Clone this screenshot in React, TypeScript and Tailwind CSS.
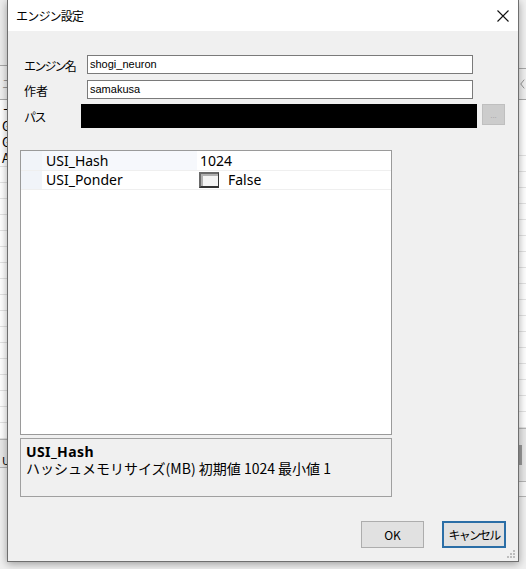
import React from "react";

const jp = { fontFamily: '"Noto Sans CJK JP", "Noto Sans", sans-serif' };
const lat = { fontFamily: '"Liberation Sans", "Noto Sans CJK JP", sans-serif' };
const noto = { fontFamily: '"Noto Sans", "Noto Sans CJK JP", sans-serif' };

function BgRows({ count }: { count: number }) {
  return (
    <>
      {Array.from({ length: count }).map((_, i) => (
        <div key={i} className="h-[16px] shrink-0 border-b border-[#e3e3e3] bg-white" />
      ))}
    </>
  );
}

function Background() {
  return (
    <div className="absolute inset-0 flex bg-[#f0f0f0]">
      <div className="flex w-[7px] flex-col overflow-hidden text-[13px] leading-none text-black" style={jp}>
        <div className="h-[65px] shrink-0 bg-[#ececec]" />
        <div className="h-[35px] shrink-0 border-y border-[#a8a8a8] bg-[#f0f0f0] pt-[10px] pl-[2px] text-[#999]">エ</div>
        <div className="h-[16px] shrink-0 bg-white pt-[5px] pl-[2px]">エ</div>
        <div className="h-[17px] shrink-0 bg-white pt-[3px] pl-[2px]">G</div>
        <div className="h-[17px] shrink-0 bg-white pt-[2px] pl-[2px]">G</div>
        <div className="h-[17px] shrink-0 border-b border-[#e3e3e3] bg-white pt-[1px] pl-[2px]">A</div>
        <BgRows count={17} />
        <div className="flex h-[28px] shrink-0 items-end border-t border-[#b5b5b5] bg-[#e8e8e8] pl-[2px] pb-[1px]">
          <div className="text-[11px]">U</div>
        </div>
        <div className="flex-1 border-t border-[#b5b5b5] bg-[#f0f0f0]" />
      </div>
      <div className="flex-1" />
      <div className="flex w-[7px] flex-col overflow-hidden">
        <div className="h-[68px] shrink-0 bg-[#f0f0f0]" />
        <div className="flex h-[32px] shrink-0 items-center border-y border-[#a8a8a8] bg-[#f0f0f0]">
          <svg width="8" height="12" viewBox="0 0 8 12"><path d="M6 1 L2 6 L6 11" stroke="#888" fill="none" strokeWidth="1" /></svg>
        </div>
        <div className="h-[40px] shrink-0 bg-white" />
        <BgRows count={18} />
        <div className="flex h-[54px] shrink-0 items-center border-y border-[#b5b5b5] bg-[#e8e8e8]">
          <div className="h-[20px] w-[3px] bg-[#9a9a9a]" />
        </div>
        <div className="h-[15px] shrink-0 border-b border-[#b5b5b5] bg-[#f7f7f7]" />
        <div className="flex-1 bg-[#f0f0f0]" />
      </div>
    </div>
  );
}

function Field({ label, value, labelClass }: { label: string; value: string; labelClass?: string }) {
  return (
    <div className="flex items-center">
      <div className={"w-[79px] pl-[16px] pt-[3px] text-[12px] leading-none text-black " + (labelClass ?? "")} style={jp}>
        {label}
      </div>
      <div className="flex h-[19px] w-[386px] items-center border border-[#7a7a7a] bg-white pl-[2px] text-[11px] leading-none text-black" style={lat}>
        {value}
      </div>
    </div>
  );
}

export default function App() {
  return (
    <div className="relative h-[569px] w-[526px] overflow-hidden">
      <Background />
      <div className="absolute left-[7px] top-0 flex h-[562px] w-[512px] flex-col border-x border-b border-[#6f6f6f] bg-[#f0f0f0] shadow-[0_2px_8px_rgba(0,0,0,0.35)]">
        {/* title bar */}
        <div className="flex h-[31px] items-center justify-between bg-white pl-[8px] pr-[9px]">
          <div className="text-[12px] leading-none tracking-[-0.8px] text-black" style={jp}>エンジン設定</div>
          <svg width="12" height="12" viewBox="0 0 12 12">
            <path d="M0.5 0.5 L11.5 11.5 M11.5 0.5 L0.5 11.5" stroke="#111" strokeWidth="1.1" fill="none" />
          </svg>
        </div>
        {/* body */}
        <div className="flex flex-1 flex-col">
          <div className="mt-[24px] flex flex-col gap-[6px]">
            <Field label="エンジン名" value="shogi_neuron" labelClass="tracking-[-1.8px]" />
            <Field label="作者" value="samakusa" />
          </div>
          <div className="mt-[5px] flex items-start">
            <div className="flex h-[24px] w-[73px] items-center pl-[16px] pt-[2px] text-[12px] leading-none tracking-[-1.5px] text-black" style={jp}>パス</div>
            <div className="h-[24px] w-[396px] bg-black" />
            <div className="ml-[5px] flex h-[21px] w-[23px] items-center justify-center border border-[#bfbfbf] bg-[#cccccc] pt-[3px] text-[8px] leading-none text-[#a0a0a0]" style={lat}>
              ...
            </div>
          </div>
          {/* property grid */}
          <div className="ml-[12px] mt-[22px] flex h-[285px] w-[372px] flex-col border border-[#9a9a9a] bg-white text-[14px] leading-none text-black" style={noto}>
            <div className="flex h-[20px] border-b border-[#efefef]">
              <div className="w-[21px] bg-[#f1f4f9]" />
              <div className="flex w-[155px] items-center bg-[#f6f8fc] pl-[4px]">USI_Hash</div>
              <div className="flex flex-1 items-center pl-[3px]">1024</div>
            </div>
            <div className="flex h-[19px] border-b border-[#efefef]">
              <div className="w-[21px] bg-[#f1f4f9]" />
              <div className="flex w-[155px] items-center pl-[4px]">USI_Ponder</div>
              <div className="flex flex-1 items-center pl-[2px]">
                <div className="h-[16px] w-[20px] border-y-2 border-l-2 border-r border-t-[#6a6a6a] border-l-[#6a6a6a] border-b-[#333] border-r-[#333] bg-[#f4f4f4] shadow-[inset_2px_2px_0_#b0b0b0]" />
                <span className="ml-[9px]">False</span>
              </div>
            </div>
          </div>
          {/* description */}
          <div className="ml-[12px] mt-[3px] flex h-[59px] w-[372px] flex-col border border-[#a0a0a0] bg-[#f0f0f0] px-[5px] pt-[4px] text-[14px] leading-[17px] text-black">
            <div className="font-bold tracking-[0.4px]" style={noto}>USI_Hash</div>
            <div className="whitespace-pre" style={jp}>ハッシュメモリサイズ(MB) 初期値 1024 最小値 1</div>
          </div>
          {/* buttons */}
          <div className="mt-[24px] flex justify-end gap-[18px] pr-[12px]">
            <div className="flex h-[27px] w-[63px] items-center justify-center border border-[#adadad] bg-[#e1e1e1] text-[12px] leading-none text-black" style={jp}>
              OK
            </div>
            <div className="flex h-[27px] w-[64px] items-center justify-center border-2 border-[#2b6ea6] bg-[#e1e1e1] text-[12px] leading-none tracking-[-1.8px] text-black" style={jp}>
              キャンセル
            </div>
          </div>
          <div className="mt-auto flex justify-end pb-[3px] pr-[3px]">
            <svg width="8" height="8" viewBox="0 0 8 8">
              <rect x="6" y="0" width="2" height="2" fill="#bdbdbd" />
              <rect x="3" y="3" width="2" height="2" fill="#bdbdbd" />
              <rect x="6" y="3" width="2" height="2" fill="#bdbdbd" />
              <rect x="0" y="6" width="2" height="2" fill="#bdbdbd" />
              <rect x="3" y="6" width="2" height="2" fill="#bdbdbd" />
              <rect x="6" y="6" width="2" height="2" fill="#bdbdbd" />
            </svg>
          </div>
        </div>
      </div>
    </div>
  );
}
